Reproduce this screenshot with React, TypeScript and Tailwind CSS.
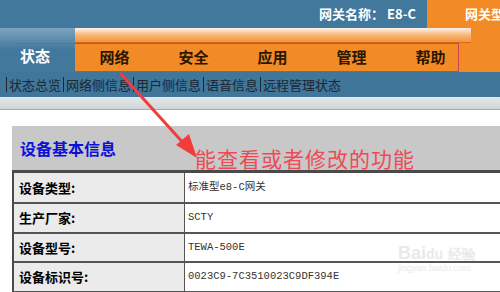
import React from 'react';

const CJK = "font-['Microsoft_YaHei','Noto_Sans_CJK_SC',sans-serif]";

const tabs = ['网络', '安全', '应用', '管理', '帮助'];
const subLinks = ['状态总览', '网络侧信息', '用户侧信息', '语音信息', '远程管理状态'];

const rows = [
  { label: '设备类型:', value: '标准型e8-C网关', h: 'h-[31px]' },
  { label: '生产厂家:', value: 'SCTY', h: 'h-[30px]' },
  { label: '设备型号:', value: 'TEWA-500E', h: 'h-[29px]' },
  { label: '设备标识号:', value: '0023C9-7C3510023C9DF394E', h: 'h-[30px]' },
];

export default function App() {
  return (
    <div className={`relative w-[500px] h-[292px] overflow-hidden bg-white ${CJK}`}>
      {/* top bar */}
      <div className="flex h-[28px] bg-[#41789c]">
        <div className="flex-1 flex items-center justify-end pr-[11px] text-[13px] font-bold text-white">
          网关名称：&nbsp;E8-C
        </div>
        <div className="w-[73px] shrink-0 bg-[#f28a26] pl-[38px] pt-[4px] text-[13px] font-bold text-white whitespace-nowrap overflow-hidden">
          网关型
        </div>
      </div>

      {/* main nav */}
      <div className="flex h-[44px]">
        <div className="w-[75px] shrink-0 bg-gradient-to-b from-[#7da3bf] via-[#41789c] to-[#41789c] flex items-end pb-[5px] pl-[20px] text-[15px] font-bold text-white">
          状态
        </div>
        <div className="flex-1 flex flex-col bg-[#f28a26]">
          <div className="h-[15px] bg-gradient-to-b from-[#fdf3ea] via-[#f8b575] to-[#f29538] border-b border-[#d9651a] mr-[29px]" />
          <div className="flex-1 flex items-center text-[15px] font-bold text-[#2b1600]">
            {tabs.map((t) => (
              <div key={t} className="w-[79px] shrink-0 text-center">{t}</div>
            ))}
          </div>
        </div>
      </div>

      {/* sub nav */}
      <div className="h-[25px] bg-[#3f769a] flex items-center pl-[4px] text-[13px] text-[#1c2733]">
        {subLinks.map((s) => (
          <span key={s} className="flex items-center">
            <span className="inline-block w-px h-[15px] bg-[#1c2733] mx-[2px]" />
            {s}
          </span>
        ))}
      </div>

      <div className="h-[13px] bg-gradient-to-b from-[#e4e7ea] to-[#d3d6d8] border-b border-[#a9a9a9]" />
      <div className="h-[16px]" />

      {/* panel title */}
      <div className="ml-[12px] h-[44px] bg-[#c8c8c8] flex items-center pl-[8px] text-[16px] font-bold text-[#0a12d8]">
        设备基本信息
      </div>

      {/* table */}
      <div className="ml-[12px] border-t-[3px] border-l-2 border-[#4a4a4a]">
        {rows.map((r) => (
          <div key={r.label} className={`flex ${r.h} border-b-2 border-[#555]`}>
            <div className="w-[171px] bg-[#ebebeb] border-r border-[#555] flex items-center pl-[5px] text-[13px] font-bold text-black">
              {r.label}
            </div>
            <div className="flex-1 flex items-center pl-[3px] text-[10.5px] text-[#333] font-['Liberation_Mono','Noto_Sans_CJK_SC',monospace]">
              {r.value}
            </div>
          </div>
        ))}
      </div>

      {/* annotation: red box around nav */}
      <div className="absolute left-[17px] top-[43px] w-[442px] h-[29px] border border-[#d2405a]" />

      {/* annotation: arrow */}
      <svg className="absolute left-0 top-0 pointer-events-none" width="500" height="292">
        <line x1="120" y1="73" x2="186" y2="146" stroke="#f23c3c" strokeWidth="3" />
        <polygon points="197,158 176,145 189,134" fill="#f23c3c" />
      </svg>

      {/* annotation: red text */}
      <div className="absolute left-[195px] top-[148px] text-[21px] leading-none text-[#ee4a55] tracking-[1px]">
        能查看或者修改的功能
      </div>

      {/* watermark */}
      <div className="absolute left-[398px] top-[244px] text-[#dcdcdc] opacity-60 leading-none">
        <div className="text-[18px] font-bold font-['Liberation_Sans',sans-serif]">Bai<span className="text-[14px]">du</span> <span className="text-[14px]">经验</span></div>
        <div className="text-[9px] font-['Liberation_Sans',sans-serif] mt-[2px]">jingyan.baidu.com</div>
      </div>
    </div>
  );
}
